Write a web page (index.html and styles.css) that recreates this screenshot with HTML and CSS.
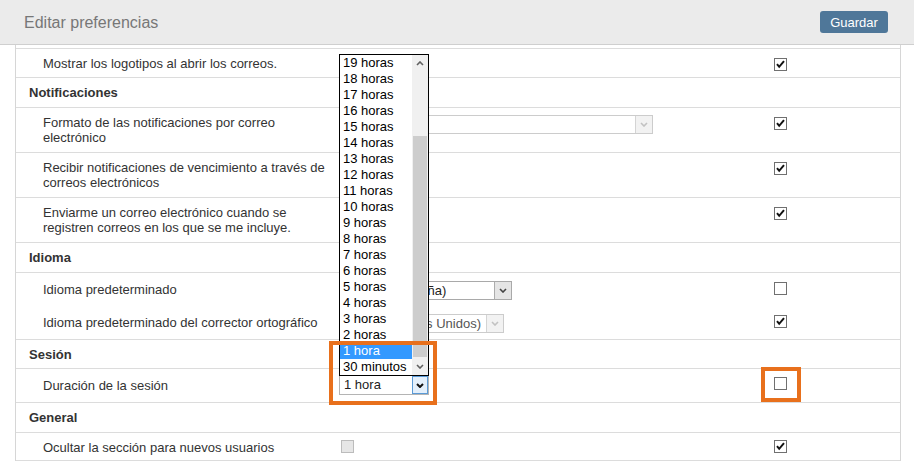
FILE: index.html
```html
<!DOCTYPE html>
<html lang="es">
<head>
<meta charset="utf-8">
<title>Editar preferencias</title>
<link rel="stylesheet" href="styles.css">
</head>
<body>
<header class="topbar">
  <h1 class="title">Editar preferencias</h1>
  <button class="save" type="button">Guardar</button>
</header>

<main class="prefs">
  <div class="tail"></div>

  <div class="row item r28">
    <div class="label">Mostrar los logotipos al abrir los correos.</div>
    <div class="ctrl"></div>
    <div class="chk"><span class="cb on"><svg viewBox="0 0 11 11"><polyline points="2,5.2 4.2,7.8 9,2.2"/></svg></span></div>
  </div>

  <div class="row section">Notificaciones</div>

  <div class="row item">
    <div class="label">Formato de las notificaciones por correo electrónico</div>
    <div class="ctrl">
      <div class="select disabled w-formato"><span class="val"></span><span class="arrow"><svg viewBox="0 0 8 5"><polyline points="1,1 4,4 7,1"/></svg></span></div>
    </div>
    <div class="chk"><span class="cb on"><svg viewBox="0 0 11 11"><polyline points="2,5.2 4.2,7.8 9,2.2"/></svg></span></div>
  </div>

  <div class="row item">
    <div class="label">Recibir notificaciones de vencimiento a través de correos electrónicos</div>
    <div class="ctrl"></div>
    <div class="chk"><span class="cb on"><svg viewBox="0 0 11 11"><polyline points="2,5.2 4.2,7.8 9,2.2"/></svg></span></div>
  </div>

  <div class="row item">
    <div class="label">Enviarme un correo electrónico cuando se registren correos en los que se me incluye.</div>
    <div class="ctrl"></div>
    <div class="chk"><span class="cb on"><svg viewBox="0 0 11 11"><polyline points="2,5.2 4.2,7.8 9,2.2"/></svg></span></div>
  </div>

  <div class="row section">Idioma</div>

  <div class="row item lang nb">
    <div class="label mid">Idioma predeterminado</div>
    <div class="ctrl">
      <div class="select w-idioma"><span class="val">Español (España)</span><span class="arrow"><svg viewBox="0 0 8 5"><polyline points="1,1 4,4 7,1"/></svg></span></div>
    </div>
    <div class="chk"><span class="cb"></span></div>
  </div>

  <div class="row item lang">
    <div class="label mid">Idioma predeterminado del corrector ortográfico</div>
    <div class="ctrl">
      <div class="select disabled w-corrector"><span class="val">Inglés (Estados Unidos)</span><span class="arrow"><svg viewBox="0 0 8 5"><polyline points="1,1 4,4 7,1"/></svg></span></div>
    </div>
    <div class="chk"><span class="cb on"><svg viewBox="0 0 11 11"><polyline points="2,5.2 4.2,7.8 9,2.2"/></svg></span></div>
  </div>

  <div class="row section s28">Sesión</div>

  <div class="row item session">
    <div class="label mid">Duración de la sesión</div>
    <div class="ctrl">
      <div class="select open w-session"><span class="val">1 hora</span><span class="arrow"><svg viewBox="0 0 8 5"><polyline points="1,1 4,4 7,1"/></svg></span></div>
    </div>
    <div class="chk"><span class="cb"></span></div>
  </div>

  <div class="row section">General</div>

  <div class="row item r27">
    <div class="label">Ocultar la sección para nuevos usuarios</div>
    <div class="ctrl"><span class="cb off"></span></div>
    <div class="chk"><span class="cb on"><svg viewBox="0 0 11 11"><polyline points="2,5.2 4.2,7.8 9,2.2"/></svg></span></div>
  </div>
</main>

<div class="dropdown">
  <ul class="options">
    <li>19 horas</li><li>18 horas</li><li>17 horas</li><li>16 horas</li><li>15 horas</li>
    <li>14 horas</li><li>13 horas</li><li>12 horas</li><li>11 horas</li><li>10 horas</li>
    <li>9 horas</li><li>8 horas</li><li>7 horas</li><li>6 horas</li><li>5 horas</li>
    <li>4 horas</li><li>3 horas</li><li>2 horas</li><li class="sel">1 hora</li><li>30 minutos</li>
  </ul>
  <div class="scrollbar">
    <span class="sb-up"><svg viewBox="0 0 8 5"><polyline points="1,4 4,1 7,4"/></svg></span>
    <span class="sb-thumb"></span>
    <span class="sb-down"><svg viewBox="0 0 8 5"><polyline points="1,1 4,4 7,1"/></svg></span>
  </div>
</div>

<div class="mark mark-select"></div>
<div class="mark mark-check"></div>
</body>
</html>
```

FILE: styles.css
```css
html, body {
  margin: 0;
  padding: 0;
}
body {
  width: 914px;
  height: 471px;
  overflow: hidden;
  position: relative;
  background: #fff;
  font-family: "Liberation Sans", Arial, sans-serif;
  font-size: 13px;
  color: #333;
}

/* header */
.topbar {
  height: 44px;
  background: #ebebeb;
  border-bottom: 1px solid #cfcfcf;
  display: flex;
  align-items: center;
  justify-content: space-between;
  padding: 0 26px 0 24px;
}
.title {
  margin: 0;
  padding-top: 1px;
  font-size: 16px;
  font-weight: normal;
  color: #777;
}
.save {
  width: 68px;
  height: 22px;
  padding: 0;
  border: 0;
  border-radius: 3px;
  background: #4f7799;
  color: #fff;
  font-family: "Liberation Sans", Arial, sans-serif;
  font-size: 13px;
}

/* table */
.prefs {
  margin: 0 13px 0 15px;
  border-left: 1px solid #d6d6d6;
  border-right: 1px solid #d6d6d6;
}
.tail {
  height: 3px;
  border-bottom: 1px solid #dcdcdc;
}
.row {
  border-bottom: 1px solid #dcdcdc;
}
.row.nb {
  border-bottom: 0;
}
.item {
  display: grid;
  grid-template-columns: 323px 322px 1fr;
  align-items: start;
}
.section {
  padding: 7px 13px;
  line-height: 15px;
  font-weight: bold;
}
.section.s28 {
  padding-bottom: 6px;
}
.label {
  padding: 7px 14px 7px 27px;
  line-height: 15px;
}
.r28 .label {
  padding-bottom: 6px;
}
.r27 .label {
  padding-bottom: 5px;
}
.label.mid {
  align-self: center;
  padding-top: 0;
  padding-bottom: 0;
}
.ctrl {
  padding-top: 7px;
}
.lang .ctrl {
  padding: 8px 0 6px;
}
.session .ctrl {
  padding: 6px 0 7px;
}
.chk {
  display: flex;
  justify-content: center;
  padding-top: 9px;
}
.session .chk {
  padding-top: 8px;
}
.r27 .chk {
  padding-top: 7px;
}

/* checkbox */
.cb {
  display: block;
  width: 13px;
  height: 13px;
  box-sizing: border-box;
  border: 1px solid #707070;
  background: #fff;
}
.cb svg {
  display: block;
  width: 11px;
  height: 11px;
  fill: none;
  stroke: #111;
  stroke-width: 2;
}
.cb.off {
  margin-left: 2px;
  border-color: #bcbcbc;
  background: #e6e6e6;
}

/* selects */
.select {
  display: flex;
  justify-content: space-between;
  box-sizing: border-box;
  height: 19px;
  border: 1px solid #a9a9a9;
  background: #fff;
  overflow: hidden;
}
.select .val {
  padding-left: 3px;
  line-height: 17px;
  white-space: nowrap;
  color: #222;
}
.select .arrow {
  flex: none;
  width: 17px;
  box-sizing: border-box;
  border-left: 1px solid #acacac;
  background: #e5e5e5;
  display: flex;
  align-items: center;
  justify-content: center;
}
.select .arrow svg {
  width: 8px;
  height: 5px;
  fill: none;
  stroke: #444;
  stroke-width: 1.6;
}
.select.disabled {
  border-color: #cccccc;
}
.select.disabled .val {
  color: #555;
}
.select.disabled .arrow {
  border-color: #d4d4d4;
  background: #f2f2f2;
}
.select.disabled .arrow svg {
  stroke: #c2c2c2;
}
.select.open {
  height: 20px;
  border-color: #b4b4b4;
}
.select.open .val {
  padding-left: 4px;
  line-height: 18px;
}
.select.open .arrow {
  width: 16px;
  border: 1px solid #5a9ad6;
  background: #e3effb;
}
.select.open .arrow svg {
  stroke: #111;
  stroke-width: 2;
}
.w-formato { width: 314px; }
.w-idioma { width: 173px; }
.w-corrector { width: 165px; }
.w-session { width: 90px; }

/* open dropdown list */
.dropdown {
  position: absolute;
  left: 339px;
  top: 54px;
  width: 88px;
  height: 320px;
  border: 1px solid #000;
  background: #fff;
  display: flex;
  z-index: 5;
}
.options {
  list-style: none;
  margin: 0;
  padding: 0;
  width: 72px;
}
.options li {
  height: 16px;
  line-height: 16px;
  padding-left: 3px;
  color: #000;
  white-space: nowrap;
}
.options li.sel {
  background: #3399ff;
  color: #fff;
}
.scrollbar {
  width: 16px;
  background: #f0f0f0;
  display: flex;
  flex-direction: column;
  align-items: center;
}
.sb-up, .sb-down {
  height: 17px;
  display: flex;
  align-items: center;
  justify-content: center;
}
.sb-up svg, .sb-down svg {
  width: 8px;
  height: 5px;
  fill: none;
  stroke: #606060;
  stroke-width: 1.6;
}
.sb-thumb {
  margin-top: 64px;
  width: 14px;
  height: 221px;
  background: #cdcdcd;
}
.sb-down {
  margin-top: auto;
}

/* orange highlights */
.mark {
  position: absolute;
  box-sizing: border-box;
  border: 4px solid #e8701c;
  z-index: 6;
}
.mark-select {
  left: 329px;
  top: 341px;
  width: 108px;
  height: 64px;
}
.mark-check {
  left: 761px;
  top: 367px;
  width: 40px;
  height: 35px;
}
```
